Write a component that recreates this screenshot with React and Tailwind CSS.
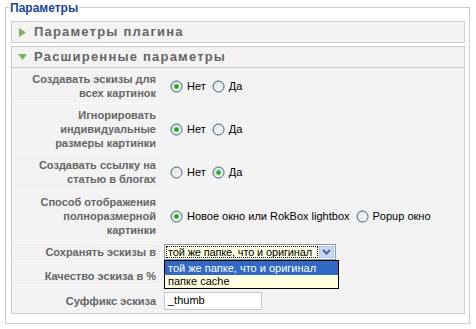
import React from "react";

function Radio({ checked }) {
  return (
    <svg width="13" height="13" viewBox="0 0 13 13" className="shrink-0">
      <defs>
        <linearGradient id="rg" x1="0" y1="0" x2="1" y2="1">
          <stop offset="0" stopColor="#dcdcd5" />
          <stop offset="1" stopColor="#ffffff" />
        </linearGradient>
      </defs>
      <circle cx="6.5" cy="6.5" r="5.5" fill="url(#rg)" stroke="#3b5a82" strokeWidth="1" />
      {checked && (
        <>
          <circle cx="6.5" cy="6.5" r="3" fill="#9be19b" />
          <circle cx="6.5" cy="6.5" r="2" fill="#21a121" />
        </>
      )}
    </svg>
  );
}

function Opt({ checked, children }) {
  return (
    <span className="flex items-center">
      <Radio checked={checked} />
      <span className="ml-[4px]">{children}</span>
    </span>
  );
}

function Row({ h, label, children, last }) {
  return (
    <div className={`flex ${h}`}>
      <div
        className={`w-[147px] shrink-0 flex items-center justify-end text-right pr-[3px] font-bold text-[#666] text-[11px] leading-[14px] ${
          last ? "" : "border-b border-[#fcfcfc]"
        }`}
      >
        <div>{label}</div>
      </div>
      <div className="flex-1 flex items-center pl-[11px] text-[11px] text-black gap-[6px] whitespace-nowrap">
        {children}
      </div>
    </div>
  );
}

export default function App() {
  return (
    <div className="w-[476px] h-[329px] bg-white pt-[7px] pl-[5px] font-['Liberation_Sans',Arial,sans-serif] overflow-hidden">
      <div className="relative w-[465px] h-[317px] border border-[#cccccc] pl-[5px] pr-[4px] pt-[13px]">
        <span className="absolute left-[3px] top-[-7px] bg-white px-[1px] text-[12px] leading-[15px] font-bold text-[#1b4596]">
          Параметры
        </span>

        <div className="h-[22px] border border-[#cccccc] bg-[#f3f3f3] flex items-center pl-[7px]">
          <svg width="7" height="9" viewBox="0 0 7 9">
            <polygon points="0,0 7,4.5 0,9" fill="#7fb05a" />
          </svg>
          <span className="ml-[8px] text-[13px] font-bold text-[#666] tracking-[1.2px]">
            Параметры плагина
          </span>
        </div>

        <div className="mt-[3px] border border-[#cccccc] bg-[#f3f3f3]">
          <div className="h-[21px] border-b border-[#cccccc] flex items-center pl-[6px]">
            <svg width="9" height="6" viewBox="0 0 9 6">
              <polygon points="0,0 9,0 4.5,6" fill="#7fb05a" />
            </svg>
            <span className="ml-[7px] text-[13px] font-bold text-[#666] tracking-[1.2px]">
              Расширенные параметры
            </span>
          </div>

          <div className="relative">
            <Row h="h-[36px]" label={<>Создавать эскизы для<br />всех картинок</>}>
              <Opt checked>Нет</Opt>
              <Opt>Да</Opt>
            </Row>
            <Row h="h-[50px]" label={<>Игнорировать<br />индивидуальные<br />размеры картинки</>}>
              <Opt checked>Нет</Opt>
              <Opt>Да</Opt>
            </Row>
            <Row h="h-[37px]" label={<>Создавать ссылку на<br />статью в блогах</>}>
              <Opt>Нет</Opt>
              <Opt checked>Да</Opt>
            </Row>
            <Row h="h-[50px]" label={<>Способ отображения<br />полноразмерной<br />картинки</>}>
              <Opt checked>Новое окно или RokBox lightbox</Opt>
              <Opt>Popup окно</Opt>
            </Row>
            <Row h="h-[23px]" label="Сохранять эскизы в">
              <div className="-ml-[6px] mt-[-1px] w-[172px] h-[16px] border border-[#7f9db9] bg-[#ffffe1] flex items-stretch p-[1px]">
                <div className="flex-1 min-w-0 overflow-hidden border border-dotted border-black flex items-center pl-[1px] leading-[12px] tracking-[-0.15px]">
                  той же папке, что и оригинал
                </div>
                <div className="w-[15px] ml-[1px] bg-[#c6d5f8] border border-[#b4c6f0] flex items-center justify-center">
                  <svg width="9" height="6" viewBox="0 0 9 6">
                    <polyline points="1,1 4.5,4.5 8,1" fill="none" stroke="#4d6185" strokeWidth="2" />
                  </svg>
                </div>
              </div>
            </Row>
            <Row h="h-[24px]" label="Качество эскиза в %">
              <span />
            </Row>
            <Row h="h-[25px]" label="Суффикс эскиза" last>
              <div className="-ml-[6px] w-[98px] h-[18px] border border-[#c8c8c8] bg-white flex items-center pl-[3px]">
                _thumb
              </div>
            </Row>

            <div className="absolute left-[152px] top-[192px] w-[175px] border border-black bg-[#ffffe1] text-[11px] leading-[14px] whitespace-nowrap">
              <div className="bg-[#316ac5] text-white pl-[3px] h-[14px]">той же папке, что и оригинал</div>
              <div className="pl-[3px] h-[13px] leading-[13px]">папке cache</div>
            </div>
          </div>
        </div>
      </div>
    </div>
  );
}
